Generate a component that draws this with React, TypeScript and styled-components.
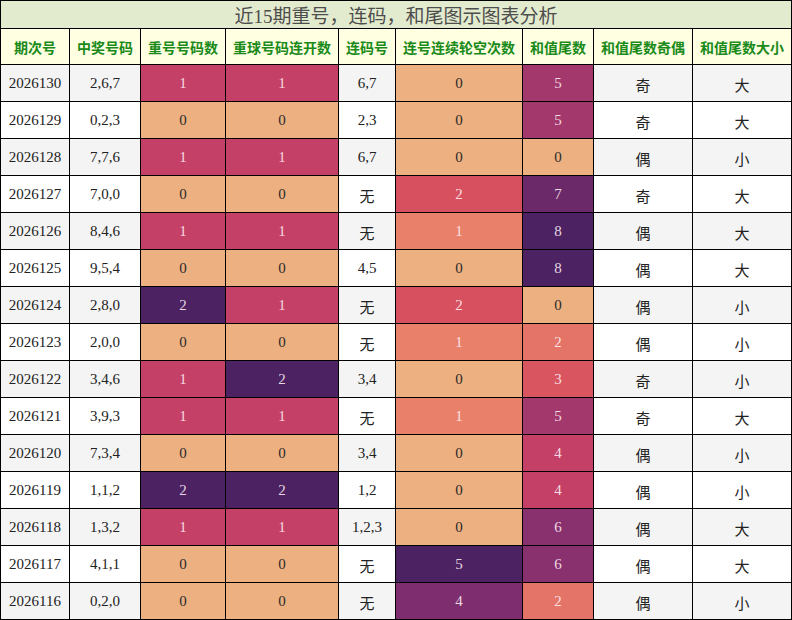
import React from "react";
import styled, { createGlobalStyle } from "styled-components";

const Global = createGlobalStyle`
  html, body { margin: 0; padding: 0; background: #fff; }
  body { font-family: "Liberation Serif", "Noto Sans CJK SC", serif; }
`;

const COLS = [69, 71, 85, 113, 57, 127, 71, 99, 99];

const Table = styled.div`
  display: grid;
  grid-template-columns: ${COLS.map((c) => `${c}px`).join(" ")};
  width: 792px;
  box-sizing: border-box;
  border-top: 1px solid #000;
  border-left: 1px solid #000;
`;

const Title = styled.div`
  grid-column: 1 / -1;
  height: 27px;
  background: #e3ebcf;
  border-right: 1px solid #000;
  border-bottom: 1px solid #000;
  display: flex;
  align-items: center;
  justify-content: center;
  color: #4d4d4d;
  font-size: 19px;
  font-family: "Liberation Serif", "Noto Sans CJK SC", serif;
`;

const Head = styled.div`
  height: 35px;
  background: #ffffe1;
  border-right: 1px solid #000;
  border-bottom: 1px solid #000;
  display: flex;
  align-items: center;
  justify-content: center;
  color: #1a8a1a;
  font-weight: bold;
  font-size: 14px;
  font-family: "Noto Sans CJK SC", sans-serif;
  white-space: nowrap;
`;

const Cell = styled.div<{ $bg: string; $fg: string; $cjk?: boolean }>`
  height: 37px;
  background: ${(p) => p.$bg};
  color: ${(p) => p.$fg};
  border-right: 1px solid #000;
  border-bottom: 1px solid #000;
  display: flex;
  align-items: center;
  justify-content: center;
  font-size: 15px;
  font-family: ${(p) =>
    p.$cjk ? `"Noto Sans CJK SC", sans-serif` : `"Liberation Serif", "Noto Sans CJK SC", serif`};
  padding-top: ${(p) => (p.$cjk ? "2px" : "0")};
  box-sizing: border-box;
`;

const STOPS: [number, number, number][] = [
  [237, 176, 129],
  [232, 128, 106],
  [215, 80, 95],
  [196, 64, 102],
  [163, 56, 109],
  [126, 45, 110],
  [76, 34, 98],
];
const POS = [0, 0.2, 0.4, 0.5, 0.625, 0.8, 1];

function flare(t: number): string {
  for (let i = 0; i < POS.length - 1; i++) {
    if (t <= POS[i + 1]) {
      const f = (t - POS[i]) / (POS[i + 1] - POS[i]);
      const c = STOPS[i].map((v, k) => Math.round(v + (STOPS[i + 1][k] - v) * f));
      return `rgb(${c[0]},${c[1]},${c[2]})`;
    }
  }
  const c = STOPS[STOPS.length - 1];
  return `rgb(${c[0]},${c[1]},${c[2]})`;
}

const HEADERS = [
  "期次号",
  "中奖号码",
  "重号号码数",
  "重球号码连开数",
  "连码号",
  "连号连续轮空次数",
  "和值尾数",
  "和值尾数奇偶",
  "和值尾数大小",
];

type Row = [string, string, number, number, string, number, number, string, string];

const ROWS: Row[] = [
  ["2026130", "2,6,7", 1, 1, "6,7", 0, 5, "奇", "大"],
  ["2026129", "0,2,3", 0, 0, "2,3", 0, 5, "奇", "大"],
  ["2026128", "7,7,6", 1, 1, "6,7", 0, 0, "偶", "小"],
  ["2026127", "7,0,0", 0, 0, "无", 2, 7, "奇", "大"],
  ["2026126", "8,4,6", 1, 1, "无", 1, 8, "偶", "大"],
  ["2026125", "9,5,4", 0, 0, "4,5", 0, 8, "偶", "大"],
  ["2026124", "2,8,0", 2, 1, "无", 2, 0, "偶", "小"],
  ["2026123", "2,0,0", 0, 0, "无", 1, 2, "偶", "小"],
  ["2026122", "3,4,6", 1, 2, "3,4", 0, 3, "奇", "小"],
  ["2026121", "3,9,3", 1, 1, "无", 1, 5, "奇", "大"],
  ["2026120", "7,3,4", 0, 0, "3,4", 0, 4, "偶", "小"],
  ["2026119", "1,1,2", 2, 2, "1,2", 0, 4, "偶", "小"],
  ["2026118", "1,3,2", 1, 1, "1,2,3", 0, 6, "偶", "大"],
  ["2026117", "4,1,1", 0, 0, "无", 5, 6, "偶", "大"],
  ["2026116", "0,2,0", 0, 0, "无", 4, 2, "偶", "小"],
];

function heat(v: number, max: number) {
  const t = v / max;
  return {
    bg: flare(t),
    fg: t < 0.1 ? "#2a2a2a" : "rgba(255,240,245,0.88)",
  };
}

export default function App() {
  return (
    <>
      <Global />
      <Table>
        <Title>近15期重号，连码，和尾图示图表分析</Title>
        {HEADERS.map((h) => (
          <Head key={h}>{h}</Head>
        ))}
        {ROWS.map((r, i) => {
          const base = i % 2 === 0 ? "#f4f4f4" : "#ffffff";
          const c2 = heat(r[2], 2);
          const c3 = heat(r[3], 2);
          const c5 = heat(r[5], 5);
          const c6 = heat(r[6], 8);
          return (
            <React.Fragment key={r[0]}>
              <Cell $bg={base} $fg="#222">{r[0]}</Cell>
              <Cell $bg={base} $fg="#222">{r[1]}</Cell>
              <Cell $bg={c2.bg} $fg={c2.fg}>{r[2]}</Cell>
              <Cell $bg={c3.bg} $fg={c3.fg}>{r[3]}</Cell>
              <Cell $bg={base} $fg="#222" $cjk={r[4] === "无"}>{r[4]}</Cell>
              <Cell $bg={c5.bg} $fg={c5.fg}>{r[5]}</Cell>
              <Cell $bg={c6.bg} $fg={c6.fg}>{r[6]}</Cell>
              <Cell $bg={base} $fg="#222" $cjk>{r[7]}</Cell>
              <Cell $bg={base} $fg="#222" $cjk>{r[8]}</Cell>
            </React.Fragment>
          );
        })}
      </Table>
    </>
  );
}
